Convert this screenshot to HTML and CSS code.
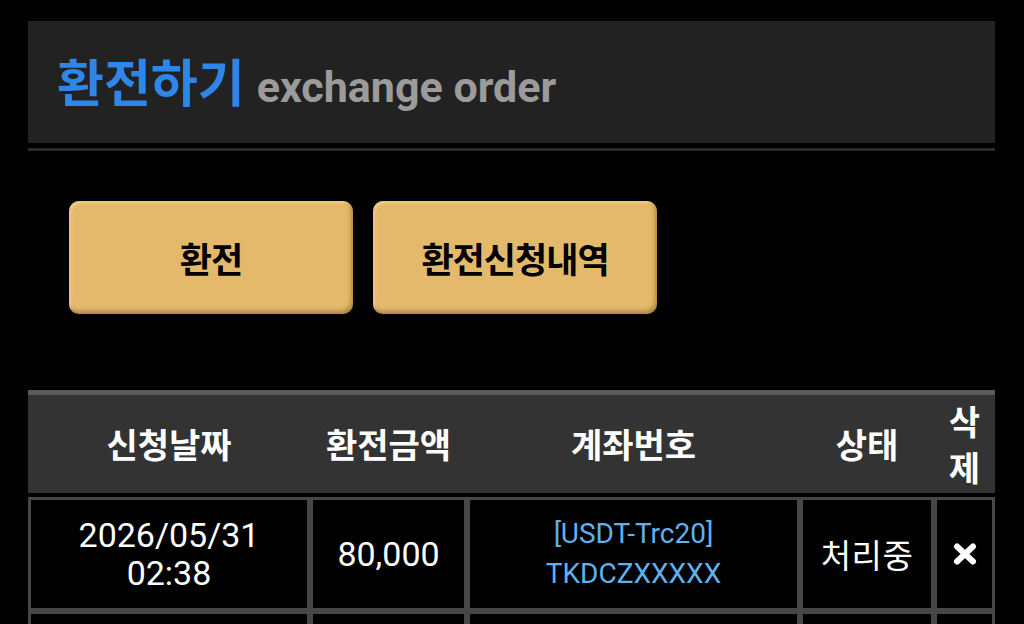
FILE: index.html
```html
<!DOCTYPE html>
<html lang="ko">
<head>
<meta charset="utf-8">
<title>환전하기</title>
<link rel="stylesheet" href="styles.css">
</head>
<body>
<div class="page">
  <div class="title-bar">
    <h1 class="title"><span class="title-ko">환전하기</span><span class="title-en">exchange order</span></h1>
  </div>
  <div class="title-rule"></div>

  <div class="tabs">
    <button class="tab" type="button">환전</button>
    <button class="tab" type="button">환전신청내역</button>
  </div>

  <div class="history">
    <table class="history-table">
      <colgroup>
        <col class="c-date">
        <col class="c-amount">
        <col class="c-account">
        <col class="c-status">
        <col class="c-del">
      </colgroup>
      <thead>
        <tr>
          <th>신청날짜</th>
          <th>환전금액</th>
          <th>계좌번호</th>
          <th>상태</th>
          <th>삭제</th>
        </tr>
      </thead>
      <tbody>
        <tr>
          <td class="num">2026/05/31<br>02:38</td>
          <td class="num">80,000</td>
          <td class="account">[USDT-Trc20]<br>TKDCZXXXXX</td>
          <td class="status">처리중</td>
          <td class="del"><svg class="x-icon" width="24" height="22" viewBox="0 0 24 22" aria-hidden="true"><path d="M4 3.5 L20 18.5 M20 3.5 L4 18.5" stroke="#fff" stroke-width="6" stroke-linecap="round"/></svg></td>
        </tr>
        <tr class="row-next">
          <td></td>
          <td></td>
          <td></td>
          <td></td>
          <td></td>
        </tr>
      </tbody>
    </table>
  </div>
</div>
</body>
</html>
```
FILE: styles.css
```css
html, body {
  margin: 0;
  padding: 0;
  background: #000;
}

body {
  font-family: Roboto, "Noto Sans CJK KR", sans-serif;
  color: #fff;
}

.page {
  padding: 21px 29px 0 28px;
}

.title-bar {
  height: 122px;
  background: #222;
  display: flex;
  align-items: center;
  padding-left: 29px;
}

.title {
  margin: 0;
  display: flex;
  align-items: baseline;
  font-weight: 700;
}

.title-ko {
  font-family: "Noto Sans CJK KR", sans-serif;
  font-size: 51px;
  letter-spacing: 0;
  color: #2d86e8;
  line-height: 1;
}

.title-en {
  font-family: Roboto, sans-serif;
  font-size: 43px;
  color: #9b9b9b;
  margin-left: 12px;
  line-height: 1;
}

.title-rule {
  height: 3px;
  margin-top: 5px;
  background: #2b2b2b;
}

.tabs {
  display: flex;
  gap: 20px;
  padding: 50px 0 0 41px;
}

.tab {
  width: 284px;
  height: 113px;
  border: 0;
  border-radius: 10px;
  background: #e5b96c;
  box-shadow:
    inset -2px -3px 4px rgba(120, 80, 20, 0.5),
    inset 2px 2px 3px rgba(255, 232, 180, 0.5);
  font-family: "Noto Sans CJK KR", sans-serif;
  font-weight: 700;
  font-size: 35px;
  letter-spacing: -1px;
  color: #000;
  padding: 0;
  display: flex;
  align-items: center;
  justify-content: center;
}

.history {
  margin-top: 76px;
}

.history-table {
  width: 100%;
  table-layout: fixed;
  border-collapse: separate;
  border-spacing: 0;
}

.c-date { width: 282px; }
.c-amount { width: 157px; }
.c-account { width: 333px; }
.c-status { width: 134px; }
.c-del { width: 61px; }

.history-table th {
  background: #333;
  border-top: 5px solid #5a5a5a;
  border-bottom: 4px solid #000;
  height: 107px;
  box-sizing: border-box;
  padding: 0 4px;
  font-family: "Noto Sans CJK KR", sans-serif;
  font-weight: 700;
  font-size: 34px;
  line-height: 46px;
  color: #fff;
  text-align: center;
  vertical-align: middle;
}

.history-table th:last-child {
  padding: 0;
}

.history-table td {
  border: 3px solid #474747;
  padding: 14px 2px;
  text-align: center;
  vertical-align: middle;
  background: #000;
}

.history-table .row-next td {
  height: 114px;
  box-sizing: border-box;
}

.num {
  font-size: 34px;
  line-height: 38px;
  color: #fff;
}

.account {
  font-size: 28px;
  line-height: 40px;
  color: #5fb1ef;
}

.status {
  font-family: "Noto Sans CJK KR", sans-serif;
  font-size: 33px;
  letter-spacing: 0.5px;
  color: #fff;
}

.x-icon {
  display: block;
  margin: 0 auto;
}
```
